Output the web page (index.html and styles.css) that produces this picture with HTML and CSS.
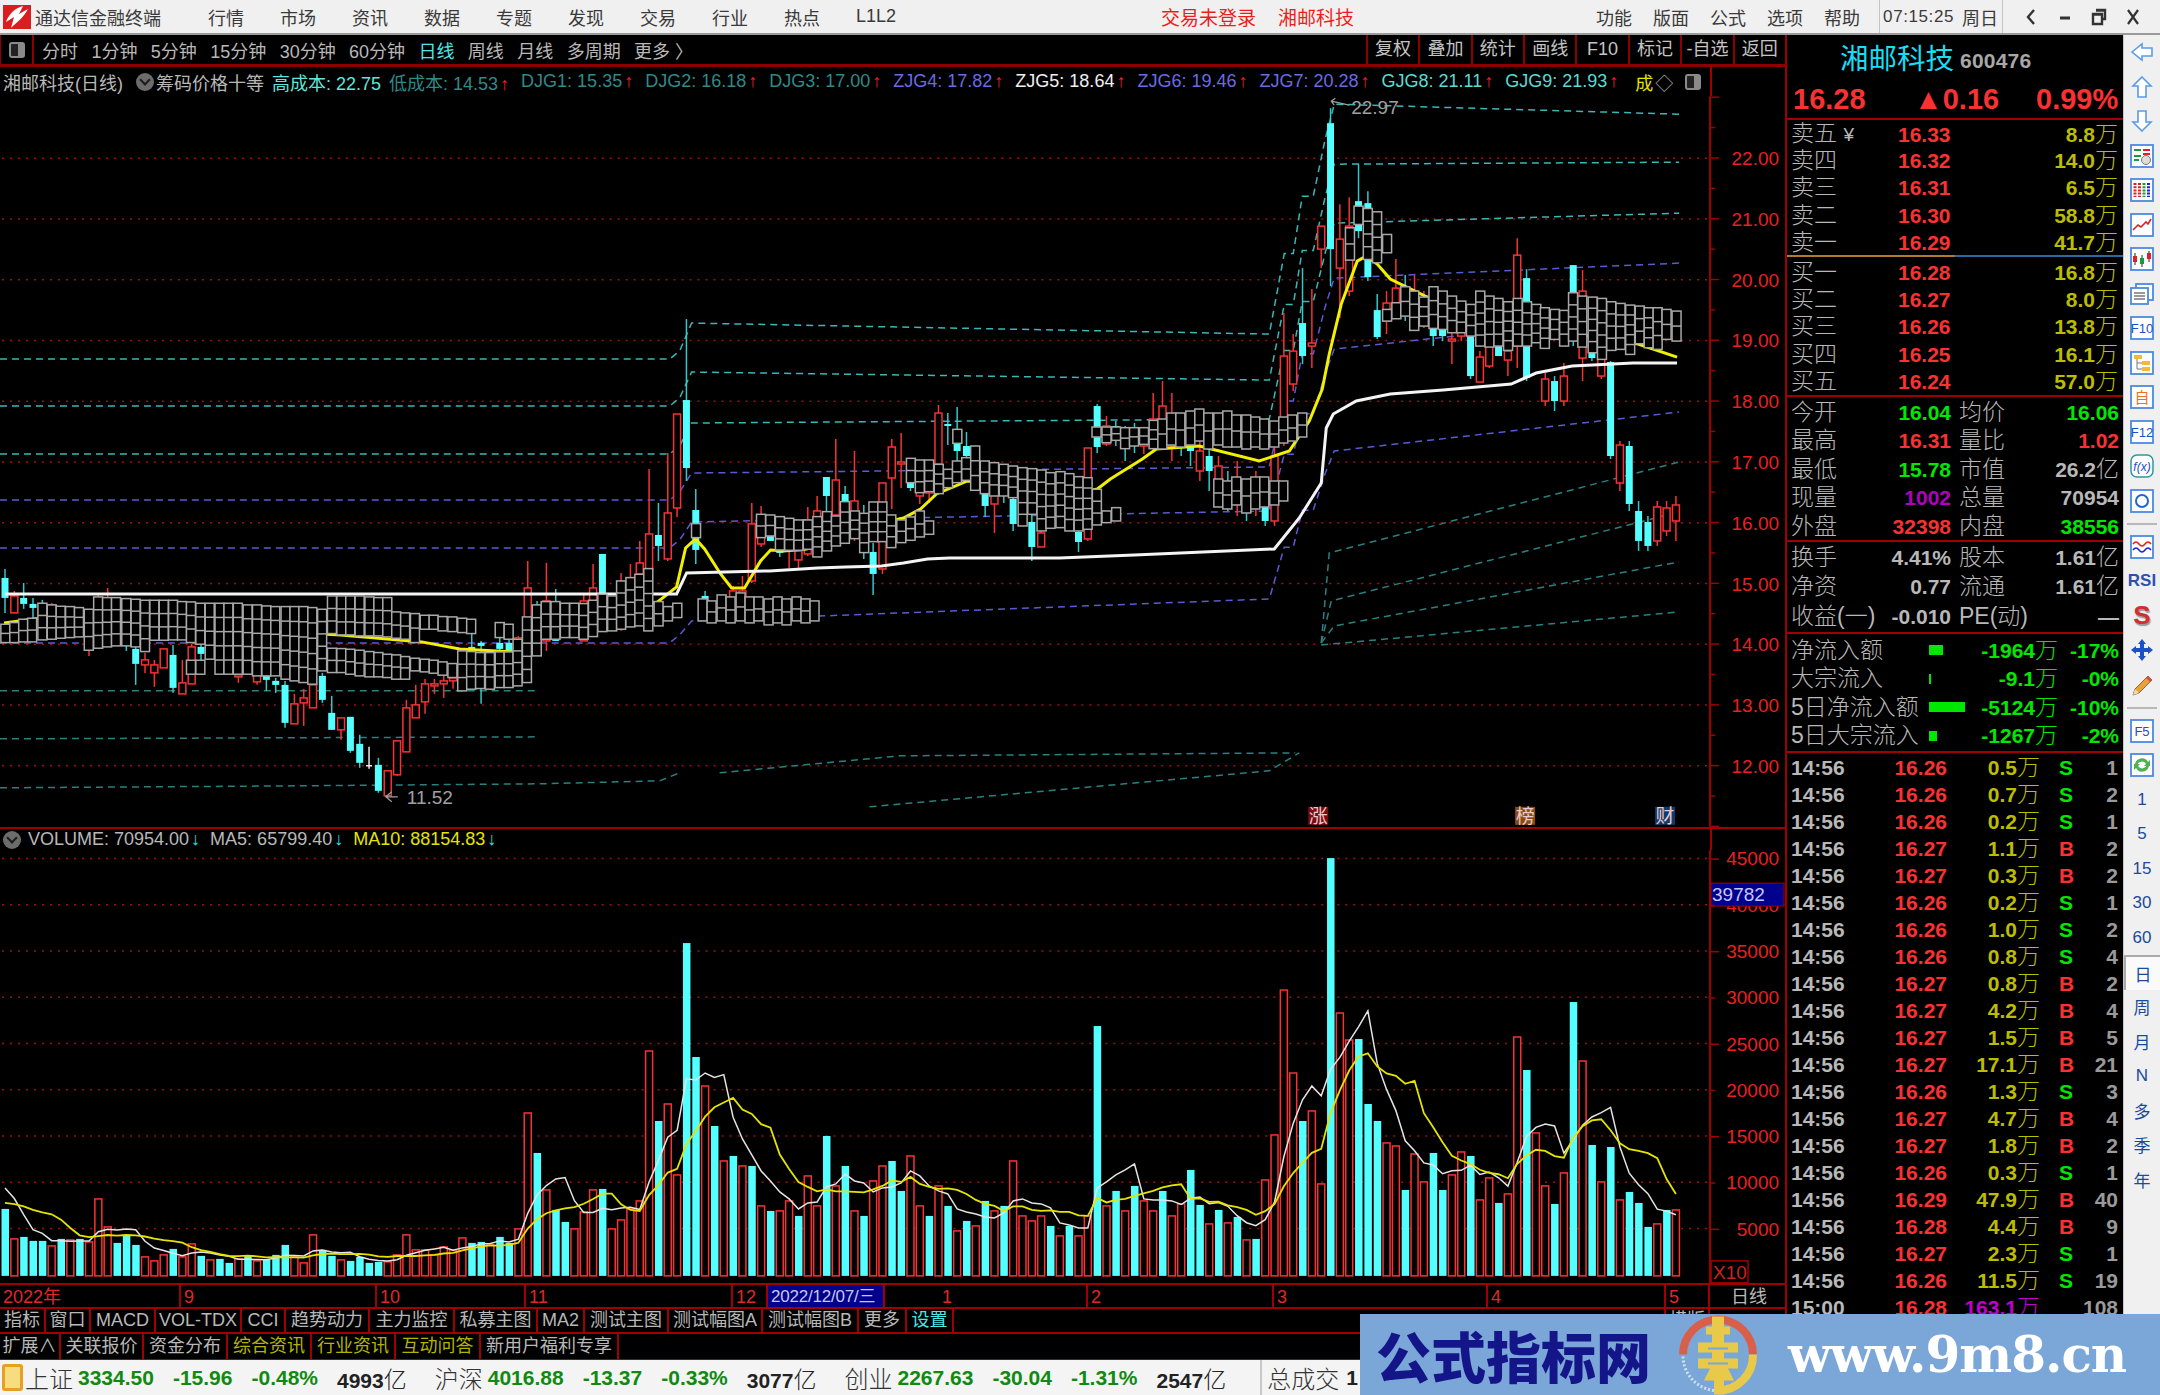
FILE: index.html
```html
<!DOCTYPE html>
<html lang="zh-CN">
<head>
    <meta charset="UTF-8">
    <title>通达信金融终端</title>
    <link rel="stylesheet" href="styles.css">
</head>
<body>

<div class="app">

    <!-- menu bar -->
    <div class="menubar">
        <svg class="logo" viewBox="0 0 28 24">
            <rect width="28" height="24" fill="#d81e1e"/>
            <path d="M20 1 C12 3 6 9 3 17 L11 12 L8 23 C14 17 20 13 25 4 L16 9 Z" fill="#fff"/>
        </svg>
        <span class="app-title">通达信金融终端</span>
        <div class="menu">
            <span>行情</span><span>市场</span><span>资讯</span><span>数据</span><span>专题</span>
            <span>发现</span><span>交易</span><span>行业</span><span>热点</span><span>L1L2</span>
        </div>
        <div class="menu-alert">
            <span>交易未登录</span><span>湘邮科技</span>
        </div>
        <div class="menu menu-right">
            <span>功能</span><span>版面</span><span>公式</span><span>选项</span><span>帮助</span>
        </div>
        <div class="clock"><span class="clock-time">07:15:25</span><span>周日</span></div>
        <div class="winbtns">
            <svg viewBox="0 0 12 20"><path d="M9 3 L3 10 L9 17" fill="none" stroke="#333" stroke-width="2.4"/></svg>
            <svg viewBox="0 0 12 20"><path d="M1 11 H11" stroke="#333" stroke-width="3"/></svg>
            <svg viewBox="0 0 16 20"><path d="M5 3 H14 V12 H11 M2 7 H11 V17 H2 Z M2 7.5 H11 M5 3.5 H14" fill="none" stroke="#333" stroke-width="2.4"/></svg>
            <svg viewBox="0 0 14 20"><path d="M2 3 L12 17 M12 3 L2 17" stroke="#333" stroke-width="2.2"/></svg>
        </div>
    </div>

    <div class="workspace">

        <!-- chart column -->
        <div class="chart-col">
            <div class="toolbar">
                <div class="tool-icon"><i></i></div>
                <div class="periods">
                    <span>分时</span><span>1分钟</span><span>5分钟</span><span>15分钟</span><span>30分钟</span><span>60分钟</span>
                    <span class="on">日线</span><span>周线</span><span>月线</span><span>多周期</span><span>更多 〉</span>
                </div>
                <div class="tool-btns">
                    <span>复权</span><span>叠加</span><span>统计</span><span>画线</span><span>F10</span><span>标记</span><span>-自选</span><span>返回</span>
                </div>
            </div>

            <div class="pane-head">
                <span class="t-name">湘邮科技(日线)</span>
                <i class="round-btn"></i>
                <span class="t-name">筹码价格十等</span>
                <span class="t-hi">高成本: 22.75</span>
                <span class="t-lo">低成本: 14.53<b>↑</b></span>
                <span class="t-lo">DJG1: 15.35<b>↑</b></span>
                <span class="t-lo">DJG2: 16.18<b>↑</b></span>
                <span class="t-lo">DJG3: 17.00<b>↑</b></span>
                <span class="t-zj">ZJG4: 17.82<b>↑</b></span>
                <span class="t-wh">ZJG5: 18.64<b>↑</b></span>
                <span class="t-zj">ZJG6: 19.46<b>↑</b></span>
                <span class="t-zj">ZJG7: 20.28<b>↑</b></span>
                <span class="t-gj">GJG8: 21.11<b>↑</b></span>
                <span class="t-gj">GJG9: 21.93<b>↑</b></span>
                <span class="t-cheng">成</span>
                <span class="t-diamond">◇</span>
                <i class="small-box"></i>
            </div>
            <svg id="priceChart" class="chart price-chart" viewBox="0 95 1786 731"></svg>

            <div class="pane-head vol-head">
                <i class="round-btn"></i>
                <span class="t-name">VOLUME: 70954.00<b class="down">↓</b></span>
                <span class="t-name">MA5: 65799.40<b class="down">↓</b></span>
                <span class="t-ma10">MA10: 88154.83<b class="down">↓</b></span>
            </div>
            <svg id="volumeChart" class="chart volume-chart" viewBox="0 849 1786 433"></svg>

            <div class="timeaxis">
                <span>2022年</span><span>9</span><span>10</span><span>11</span><span>12</span>
                <span class="cursor-date">2022/12/07/三</span><span class="blank"></span>
                <span>1</span><span>2</span><span>3</span><span>4</span><span>5</span>
                <span class="period-name">日线</span>
            </div>

            <div class="tabs tabs-a">
                <span>指标</span><span>窗口</span><span>MACD</span><span>VOL-TDX</span><span>CCI</span><span>趋势动力</span><span>主力监控</span>
                <span>私募主图</span><span>MA2</span><span>测试主图</span><span>测试幅图A</span><span>测试幅图B</span><span>更多</span><span class="cyan">设置</span>
                <span class="blank"></span><span>横版</span>
            </div>
            <div class="tabs tabs-b">
                <span>扩展∧</span><span>关联报价</span><span>资金分布</span><span class="olive">综合资讯</span><span class="olive">行业资讯</span><span class="olive">互动问答</span><span>新用户福利专享</span>
            </div>
        </div>

        <!-- quote panel -->
        <div class="quote">
            <div class="q-title"><span class="q-name">湘邮科技</span><span class="q-code">600476</span></div>
            <div class="q-price">
                <span>16.28</span><span>▲0.16</span><span>0.99%</span>
            </div>

            <div class="book book-sell">
                <div class="book-row"><label>卖五 <small>¥</small></label><b>16.33</b><em>8.8<u>万</u></em></div>
                <div class="book-row"><label>卖四</label><b>16.32</b><em>14.0<u>万</u></em></div>
                <div class="book-row"><label>卖三</label><b>16.31</b><em>6.5<u>万</u></em></div>
                <div class="book-row"><label>卖二</label><b>16.30</b><em>58.8<u>万</u></em></div>
                <div class="book-row"><label>卖一</label><b>16.29</b><em>41.7<u>万</u></em></div>
            </div>
            <div class="book book-buy">
                <div class="book-row"><label>买一</label><b>16.28</b><em>16.8<u>万</u></em></div>
                <div class="book-row"><label>买二</label><b>16.27</b><em>8.0<u>万</u></em></div>
                <div class="book-row"><label>买三</label><b>16.26</b><em>13.8<u>万</u></em></div>
                <div class="book-row"><label>买四</label><b>16.25</b><em>16.1<u>万</u></em></div>
                <div class="book-row"><label>买五</label><b>16.24</b><em>57.0<u>万</u></em></div>
            </div>

            <div class="stats">
                <div class="kv"><label>今开</label><b class="green">16.04</b></div><div class="kv"><label>均价</label><b class="green">16.06</b></div>
                <div class="kv"><label>最高</label><b class="red">16.31</b></div><div class="kv"><label>量比</label><b class="red">1.02</b></div>
                <div class="kv"><label>最低</label><b class="green">15.78</b></div><div class="kv"><label>市值</label><b>26.2<u>亿</u></b></div>
                <div class="kv"><label>现量</label><b class="purple">1002</b></div><div class="kv"><label>总量</label><b>70954</b></div>
                <div class="kv"><label>外盘</label><b class="red">32398</b></div><div class="kv"><label>内盘</label><b class="green">38556</b></div>
            </div>
            <div class="stats stats-b">
                <div class="kv"><label>换手</label><b>4.41%</b></div><div class="kv"><label>股本</label><b>1.61<u>亿</u></b></div>
                <div class="kv"><label>净资</label><b>0.77</b></div><div class="kv"><label>流通</label><b>1.61<u>亿</u></b></div>
                <div class="kv"><label>收益(一)</label><b>-0.010</b></div><div class="kv"><label>PE(动)</label><b>—</b></div>
            </div>

            <div class="flows">
                <div class="flow-row"><label>净流入额</label><div class="flow-bar"><i style="width:14px"></i></div><b>-1964<u>万</u></b><b>-17%</b></div>
                <div class="flow-row"><label>大宗流入</label><div class="flow-bar"><i style="width:2px"></i></div><b>-9.1<u>万</u></b><b>-0%</b></div>
                <div class="flow-row"><label>5日净流入额</label><div class="flow-bar"><i style="width:36px"></i></div><b>-5124<u>万</u></b><b>-10%</b></div>
                <div class="flow-row"><label>5日大宗流入</label><div class="flow-bar"><i style="width:8px"></i></div><b>-1267<u>万</u></b><b>-2%</b></div>
            </div>

            <div id="ticks" class="ticks"></div>
        </div>

        <!-- right icon strip -->
        <div class="side">
            <div class="side-item"><svg viewBox="0 0 24 24"><path class="ol" d="M2 12 L12 4 V8 H22 V16 H12 V20 Z"/></svg></div>
            <div class="side-item"><svg viewBox="0 0 24 24"><path class="ol" d="M12 2 L21 11 H16 V22 H8 V11 H3 Z"/></svg></div>
            <div class="side-item"><svg viewBox="0 0 24 24"><path class="ol" d="M12 22 L21 13 H16 V2 H8 V13 H3 Z"/></svg></div>
            <div class="side-item"><svg viewBox="0 0 24 24"><rect class="box" x="1" y="1" width="22" height="22"/><path d="M4 6 H11 M4 12 H11 M4 16 H9" stroke="#1a9a3a" stroke-width="2"/><path d="M13 6 H20 M13 10 H20" stroke="#e02020" stroke-width="2"/><circle cx="16" cy="16" r="4.5" fill="#ddd" stroke="#777"/></svg></div>
            <div class="side-item"><svg viewBox="0 0 24 24"><rect class="box" x="1" y="1" width="22" height="22"/><path d="M5 5 V19" stroke="#e02020" stroke-width="3" stroke-dasharray="2 1.2"/><path d="M9.5 5 V19" stroke="#e02020" stroke-width="3" stroke-dasharray="2 1.2"/><path d="M14 5 V19" stroke="#1a9a3a" stroke-width="3" stroke-dasharray="2 1.2"/><path d="M18.5 5 V19" stroke="#2020e0" stroke-width="3" stroke-dasharray="2 1.2"/></svg></div>
            <div class="side-item"><svg viewBox="0 0 24 24"><rect class="box" x="1" y="1" width="22" height="22"/><path d="M3 17 L8 12 L11 14 L16 9 L18 11 L21 6" fill="none" stroke="#e02020" stroke-width="1.6"/></svg></div>
            <div class="side-item"><svg viewBox="0 0 24 24"><rect class="box" x="1" y="1" width="22" height="22"/><path d="M5 6 V18 M12 8 V20 M19 4 V15" stroke="#222"/><rect x="3" y="9" width="4" height="6" fill="#e02020"/><rect x="10" y="11" width="4" height="6" fill="#1a9a3a"/><rect x="17" y="6" width="4" height="6" fill="#e02020"/></svg></div>
            <div class="side-item"><svg viewBox="0 0 24 24"><rect class="box" x="6" y="2" width="17" height="16"/><rect class="box" x="1" y="6" width="17" height="16"/><path d="M4 11 H15 M4 14 H15 M4 17 H15" stroke="#777" stroke-width="1.6"/></svg></div>
            <div class="side-item"><svg viewBox="0 0 24 24"><rect class="box" x="1" y="1" width="22" height="22"/><text class="ico-t" x="12" y="17" font-size="13">F10</text></svg></div>
            <div class="side-item"><svg viewBox="0 0 24 24"><rect class="box" x="1" y="1" width="22" height="22"/><path d="M7 8 V18 H12 M7 12 H12" stroke="#777" fill="none"/><rect x="4" y="4" width="8" height="4" fill="#f5b93a"/><rect x="12" y="10" width="8" height="4" fill="#f5b93a"/><rect x="12" y="16" width="8" height="4" fill="#f5b93a"/></svg></div>
            <div class="side-item"><svg viewBox="0 0 24 24"><rect class="box" x="1" y="1" width="22" height="22"/><text class="ico-t ico-or" x="12" y="18" font-size="15">自</text></svg></div>
            <div class="side-item"><svg viewBox="0 0 24 24"><rect class="box" x="1" y="1" width="22" height="22"/><text class="ico-t" x="12" y="17" font-size="13">F12</text></svg></div>
            <div class="side-item"><svg viewBox="0 0 24 24"><rect x="1" y="1" width="22" height="22" rx="6" fill="#fff" stroke="#2a9a9a" stroke-width="1.5"/><text class="ico-t" x="12" y="17" font-size="12" font-style="italic">f(x)</text></svg></div>
            <div class="side-item"><svg viewBox="0 0 24 24"><rect class="box" x="1" y="1" width="22" height="22"/><circle cx="12" cy="12" r="6" fill="none" stroke="#1a6ad0" stroke-width="2"/></svg></div>
            <div class="side-sep"></div>
            <div class="side-item"><svg viewBox="0 0 24 24"><rect class="box" x="1" y="1" width="22" height="22"/><path d="M3 9 Q6 5 9 9 T15 9 T21 9" fill="none" stroke="#e02020" stroke-width="1.5"/><path d="M3 15 Q6 11 9 15 T15 15 T21 15" fill="none" stroke="#2020e0" stroke-width="1.5"/></svg></div>
            <div class="side-item"><span class="side-rsi">RSI</span></div>
            <div class="side-item"><span class="side-s">S</span></div>
            <div class="side-item"><svg viewBox="0 0 24 24"><path d="M12 1 L16 6 H14 V10 H18 V8 L23 12 L18 16 V14 H14 V18 H16 L12 23 L8 18 H10 V14 H6 V16 L1 12 L6 8 V10 H10 V6 H8 Z" fill="#1a50c8"/></svg></div>
            <div class="side-item"><svg viewBox="0 0 24 24"><path d="M3 22 L5 16 L18 3 L22 7 L9 20 Z" fill="#e9a23a" stroke="#8a6a30"/><path d="M18 3 L22 7 L20 9 L16 5 Z" fill="#d05050"/><path d="M3 22 L5 16 L9 20 Z" fill="#f3d9b0"/></svg></div>
            <div class="side-sep"></div>
            <div class="side-item"><svg viewBox="0 0 24 24"><rect class="box" x="1" y="1" width="22" height="22"/><text class="ico-t" x="12" y="17" font-size="13">F5</text></svg></div>
            <div class="side-item"><svg viewBox="0 0 24 24"><rect class="box" x="1" y="1" width="22" height="22"/><path d="M5 11 A7 7 0 0 1 18 9 L20 7 V13 H14 L16 11 A5 5 0 0 0 7 12 Z M19 13 A7 7 0 0 1 6 15 L4 17 V11 H10 L8 13 A5 5 0 0 0 17 12 Z" fill="#50b050"/></svg></div>
            <div class="side-item side-txt">1</div>
            <div class="side-item side-txt">5</div>
            <div class="side-item side-txt">15</div>
            <div class="side-item side-txt">30</div>
            <div class="side-item side-txt">60</div>
            <div class="side-item side-txt side-on">日</div>
            <div class="side-item side-txt">周</div>
            <div class="side-item side-txt">月</div>
            <div class="side-item side-txt">N</div>
            <div class="side-item side-txt">多</div>
            <div class="side-item side-txt">季</div>
            <div class="side-item side-txt">年</div>
        </div>
    </div>

    <!-- index strip -->
    <div class="statusbar">
        <i class="status-icon"></i>
        <div class="index"><label>上证</label><b>3334.50</b><b>-15.96</b><b>-0.48%</b><em>4993<u>亿</u></em></div>
        <div class="index"><label>沪深</label><b>4016.88</b><b>-13.37</b><b>-0.33%</b><em>3077<u>亿</u></em></div>
        <div class="index index-last"><label>创业</label><b>2267.63</b><b>-30.04</b><b>-1.31%</b><em>2547<u>亿</u></em></div>
        <div class="index index-total"><label>总成交</label><em>1</em></div>
    </div>

    <!-- site stamp over the screenshot corner -->
    <div class="stamp">
        <span class="stamp-cn">公式指标网</span>
        <svg class="stamp-logo" viewBox="0 0 80 80">
            <path d="M5 40 A35 35 0 0 1 75 40" fill="none" stroke="#d8604a" stroke-width="8"/>
            <path d="M75 40 A35 35 0 0 1 40 76" fill="none" stroke="#e9c94a" stroke-width="8"/>
            <path d="M5 42 A35 35 0 0 0 36 76" fill="none" stroke="#cfe0f2" stroke-width="3" stroke-dasharray="2 2"/>
            <path d="M34 2 H46 V12 H52 V20 H46 V28 H60 V38 H46 V44 H60 V54 H50 L56 66 H46 V80 H36 V66 H26 L32 54 H20 V44 H34 V38 H20 V28 H34 V20 H28 V12 H34 Z" fill="#e9c94a"/>
            <path d="M30 34 H50 M30 49 H50" stroke="#7ba7d8" stroke-width="2"/>
        </svg>
        <span class="stamp-url">www.9m8.cn</span>
    </div>
</div>

<script src="chart.js"></script>
</body>
</html>
```

FILE: styles.css
```css
* {
    box-sizing: border-box;
}

body {
    margin: 0;
    background-color: #000;
    font-family: 'Liberation Sans', 'Noto Sans CJK SC', sans-serif;
    font-size: 18px;
    color: #b8b8b8;
}

.app {
    position: relative;
    width: 2160px;
    height: 1395px;
    overflow: hidden;
    display: flex;
    flex-direction: column;
}

/* menu bar */
.menubar {
    height: 35px;
    flex: none;
    display: flex;
    align-items: center;
    background-color: #f0f0f0;
    border-bottom: 2px solid #9a9a9a;
    color: #3a3a3a;
    padding-left: 3px;
}

.logo {
    width: 28px;
    height: 24px;
    flex: none;
}

.app-title {
    margin-left: 4px;
}

.menu {
    display: flex;
    align-items: center;
    gap: 36px;
    margin-left: 47px;
}

.menu-alert {
    display: flex;
    gap: 22px;
    margin-left: 265px;
    font-size: 19px;
    color: #f01c1c;
}

.menu-right {
    gap: 21px;
    margin-left: 242px;
}

.clock {
    display: flex;
    gap: 8px;
    height: 100%;
    align-items: center;
    margin-left: 19px;
    padding: 0 4px 0 3px;
    border-left: 1px solid #c4c4c4;
    border-right: 1px solid #c4c4c4;
}

.clock-time {
    font-size: 17px;
    letter-spacing: 0.6px;
}

.winbtns {
    display: flex;
    align-items: center;
    gap: 18px;
    margin-left: 20px;
}

.winbtns svg {
    height: 20px;
    width: 16px;
}

.workspace {
    flex: 1;
    min-height: 0;
    display: flex;
}

/* chart column */
.chart-col {
    width: 1787px;
    flex: none;
    display: flex;
    flex-direction: column;
    border-right: 2px solid #a00000;
}

.toolbar {
    height: 32px;
    flex: none;
    display: flex;
    align-items: center;
    border-bottom: 3px solid #8c0000;
    border-left: 1px solid #8c0000;
}

.tool-icon {
    width: 33px;
    height: 100%;
    display: flex;
    align-items: center;
    justify-content: center;
    border-right: 2px solid #8c0000;
}

.tool-icon i,
.small-box {
    display: block;
    width: 16px;
    height: 16px;
    flex: none;
    border: 2px solid #8a8a8a;
    border-radius: 3px;
    background: linear-gradient(90deg, #222 60%, #8a8a8a 60%);
}

.periods {
    display: flex;
    gap: 13.4px;
    margin-left: 8px;
}

.periods .on {
    color: #4ce8e8;
}

.tool-btns {
    margin-left: auto;
    display: grid;
    grid-template-columns: repeat(8, 52.4px);
    height: 100%;
    text-align: center;
    line-height: 29px;
    color: #c4c4c4;
}

.tool-btns span {
    border-left: 2px solid #8c0000;
}

.pane-head {
    height: 29px;
    width: 1712px;
    flex: none;
    display: flex;
    align-items: center;
    padding-left: 3px;
    border-right: 2px solid #a00000;
    white-space: nowrap;
}

.pane-head span {
    margin-right: 8px;
}

.pane-head b {
    color: #ff2020;
    font-weight: normal;
    margin-left: 2px;
    margin-right: 4px;
}

.pane-head b.down {
    color: #30e0e0;
}

.round-btn {
    position: relative;
    width: 18px;
    height: 18px;
    margin: 0 2px 0 5px;
    border-radius: 50%;
    background-color: #6c6c6c;
    flex: none;
}

.round-btn::after {
    content: '';
    position: absolute;
    left: 5px;
    top: 3px;
    width: 6px;
    height: 6px;
    border-right: 2px solid #1c1c1c;
    border-bottom: 2px solid #1c1c1c;
    transform: rotate(45deg);
}

.t-hi {
    color: #5ee6dc;
}

.t-lo {
    color: #2f8a8a;
}

.t-zj {
    color: #6a6ae6;
}

.t-wh {
    color: #f0f0f0;
}

.t-gj {
    color: #58dcd4;
}

.t-cheng {
    color: #e4e400;
    margin-left: 5px;
}

.t-diamond {
    color: #a0a0a0;
    margin-left: -6px;
}

.small-box {
    margin-left: 4px;
}

.chart {
    display: block;
    flex: none;
    width: 1785px;
    background-color: #000;
    overflow: visible;
}

.price-chart {
    height: 731px;
}

.volume-chart {
    height: 433px;
}

.vol-head {
    height: 23px;
    border-top: 2px solid #a00000;
    width: 100%;
    border-right: none;
    background: linear-gradient(90deg, transparent 1710px, #a00000 1710px, #a00000 1712px, transparent 1712px);
}

.vol-head .round-btn {
    margin: 0 7px 0 0;
}

.vol-head b {
    margin-right: 3px;
}

.vol-head span {
    margin-right: 7px;
}

.t-ma10 {
    color: #e4e400;
}

.chart text {
    font-family: 'Liberation Sans', 'Noto Sans CJK SC', sans-serif;
    font-size: 19px;
}

.axis-label {
    fill: #e82020;
    text-anchor: end;
}

.note {
    fill: #a0a0a0;
}

.mark-label {
    fill: #e8c8c8;
    text-anchor: middle;
}

.blue-label {
    fill: #c8c8ff;
}

.x-label {
    fill: #d02020;
}

/* time axis and tabs */
.timeaxis {
    height: 24px;
    flex: none;
    display: grid;
    grid-template-columns: 181px 196px 149px 207px 35px 117px 54px 149px 186px 214px 178px 44px 1fr;
    border-top: 2px solid #a00000;
    line-height: 24px;
    color: #e02828;
    overflow: hidden;
}

.timeaxis span {
    padding-left: 3px;
    border-right: 2px solid #a00000;
    white-space: nowrap;
}

.timeaxis .cursor-date {
    background-color: #00008c;
    color: #c8c8e8;
    font-size: 17px;
    letter-spacing: -0.2px;
}

.timeaxis .blank {
    border-right: none;
}

.timeaxis .period-name {
    color: #b8b8b8;
    text-align: center;
    border-right: none;
}

.tabs {
    flex: none;
    display: grid;
    border-top: 2px solid #a00000;
    text-align: center;
    white-space: nowrap;
}

.tabs span {
    border-right: 2px solid #a00000;
}

.tabs-a {
    height: 25px;
    line-height: 22px;
    grid-template-columns: 46px 45px 65px 86px 44px 84px 85px 83px 47px 84px 94px 96px 48px 47px 712px 44px 1fr;
}

.tabs-b {
    height: 29px;
    line-height: 25px;
    grid-template-columns: 61px 83px 84px 84px 84px 85px 138px;
    border-bottom: 2px solid #a00000;
}

.tabs .cyan {
    color: #4ce8e8;
}

.tabs .olive {
    color: #b4b400;
}

.tabs .blank {
    border-right: 2px solid #a00000;
}

/* quote panel */
.quote {
    width: 336px;
    flex: none;
    overflow: hidden;
    background-color: #000;
    border-bottom: 2px solid #a00000;
}

.q-title {
    height: 48px;
    display: flex;
    align-items: center;
    padding: 0 0 0 53px;
    gap: 6px;
}

.q-name {
    font-size: 28.5px;
    color: #19dcf5;
    line-height: 1;
}

.q-code {
    font-size: 21px;
    font-weight: bold;
    color: #a8a8a8;
    letter-spacing: 0.2px;
    padding-top: 4px;
}

.q-price {
    height: 37px;
    display: grid;
    grid-template-columns: 121px 122px 1fr;
    align-items: center;
    padding: 0 6px 5px;
    font-size: 29px;
    font-weight: bold;
    color: #f83232;
    border-bottom: 2px solid #a00000;
}

.q-price span:nth-child(3) {
    text-align: right;
}

.book {
    padding: 0 5px 0 4px;
}

.book-sell {
    height: 137px;
    padding-top: 0;
    border-bottom: 2px solid;
    border-image: linear-gradient(90deg, #b07a28 50%, #2a6aa0 50%) 1;
}

.book-buy {
    height: 140px;
    padding-top: 2px;
    border-bottom: 2px solid #a00000;
}

.book-row {
    height: 27.2px;
    display: grid;
    grid-template-columns: 107px 70px 1fr;
    align-items: center;
}

.book-row label,
.kv label,
.flow-row label {
    font-size: 23px;
    line-height: 27px;
    font-weight: 300;
    white-space: nowrap;
}

.book-row small {
    font-size: 19px;
}

.book-row b,
.book-row em,
.kv b,
.flow-row b,
.tick b,
.tick span {
    font-size: 21px;
    font-weight: bold;
    font-style: normal;
    line-height: 27px;
}

.book-row b {
    color: #f83232;
}

.book-row em {
    color: #bcbc00;
    text-align: right;
}

u {
    text-decoration: none;
    font-size: 23px;
    font-weight: 300;
}

.stats {
    display: grid;
    grid-template-columns: 160px 160px;
    column-gap: 8px;
    padding: 1px 4px 0;
    height: 145px;
    border-bottom: 2px solid #a00000;
}

.stats-b {
    height: 92px;
}

.kv {
    height: 28.5px;
    display: flex;
    justify-content: space-between;
    align-items: center;
}

.kv b {
    color: #b8b8b8;
    white-space: nowrap;
}

.kv .green {
    color: #00e800;
}

.kv .red {
    color: #f83232;
}

.kv .purple {
    color: #b000c0;
}

.flows {
    height: 119px;
    padding: 2px 4px 0;
    border-bottom: 2px solid #a00000;
}

.flow-row {
    height: 28.5px;
    display: grid;
    grid-template-columns: 138px 44px 85px 1fr;
    align-items: center;
    white-space: nowrap;
}

.flow-row b {
    color: #00e800;
    text-align: right;
}

.flow-bar i {
    display: block;
    height: 10px;
    background-color: #00e800;
}

.ticks {
    padding: 1px 5px 0 4px;
}

.tick {
    height: 27px;
    display: grid;
    grid-template-columns: 70px 86px 93px 30px 1fr;
    align-items: center;
    white-space: nowrap;
}

.tick .t-time {
    color: #b8b8b8;
}

.tick .t-price,
.tick .t-vol,
.tick .t-count {
    text-align: right;
}

.tick .t-vol {
    color: #bcbc00;
}

.tick .t-vol.big {
    color: #c000d0;
}

.tick .t-side {
    padding-left: 19px;
}

.tick .t-count {
    color: #9a9a9a;
}

.up {
    color: #f83232 !important;
}

.down-t {
    color: #00e800 !important;
}

/* right icon strip */
.side {
    flex: 1;
    display: flex;
    flex-direction: column;
    background-color: #f0f0f0;
    align-items: center;
    border-left: 1px solid #c8c8c8;
}

.side-item {
    height: 34.5px;
    width: 100%;
    flex: none;
    display: flex;
    align-items: center;
    justify-content: center;
}

.side-item svg {
    width: 24px;
    height: 24px;
}

.ol {
    fill: #fff;
    stroke: #5b9bea;
    stroke-width: 1.6;
}

.box {
    fill: #fff;
    stroke: #4a8ae0;
    stroke-width: 1.8;
}

.ico-t {
    fill: #1a50c8;
    text-anchor: middle;
    font-family: 'Liberation Sans', sans-serif;
}

.ico-or {
    fill: #f07020;
    font-family: 'Noto Sans CJK SC', sans-serif;
}

.side-sep {
    height: 11.5px;
    width: 30px;
    flex: none;
    background: linear-gradient(#b8b8b8, #b8b8b8) center / 100% 2px no-repeat;
}

.side-rsi {
    font-size: 17px;
    font-weight: bold;
    color: #3050b0;
}

.side-s {
    font-size: 26px;
    font-weight: bold;
    color: #d03030;
    text-shadow: 1px 2px 1px #999;
}

.side-txt {
    font-size: 17px;
    color: #1a4a9a;
}

.side-on {
    background-color: #fafafa;
    border-left: 2px solid #aaa;
    border-top: 2px solid #aaa;
}

/* index strip */
.statusbar {
    height: 35px;
    flex: none;
    display: flex;
    align-items: center;
    background-color: #f4f4f4;
    color: #333;
    padding-left: 2px;
    white-space: nowrap;
}

.status-icon {
    width: 21px;
    height: 27px;
    flex: none;
    border-radius: 3px;
    border: 3px solid #e8a020;
    background-color: #f8dc80;
    margin-right: 2px;
}

.index {
    display: flex;
    align-items: center;
    gap: 19px;
    margin-right: 28px;
}

.index-last {
    margin-right: 34px;
}

.index label {
    font-size: 24px;
    font-weight: 300;
    margin-right: -14px;
}

.index b {
    font-size: 21px;
    color: #118a11;
}

.index em {
    font-style: normal;
    font-size: 21px;
    font-weight: bold;
    color: #222;
}

.index-total {
    border-left: 2px solid #c8c8c8;
    padding-left: 5px;
    gap: 7px;
    margin-left: 0;
}

.index-total label {
    margin-right: 0;
}

/* site stamp */
.stamp {
    position: absolute;
    left: 1360px;
    top: 1314px;
    width: 800px;
    height: 81px;
    background-color: #7ba7d8;
    display: flex;
    align-items: center;
    padding-left: 16px;
}

.stamp-cn {
    font-family: 'Noto Sans CJK SC', sans-serif;
    font-size: 55px;
    font-weight: 900;
    color: #15158a;
    line-height: 1;
}

.stamp-logo {
    width: 80px;
    height: 81px;
    margin-left: 27px;
    flex: none;
}

.stamp-url {
    font-family: 'DejaVu Serif', serif;
    font-size: 50px;
    font-weight: bold;
    color: #fff;
    margin-left: 30px;
    letter-spacing: -1px;
    line-height: 1;
}
```

FILE: chart.js
```js
const CYAN = '#54ffff';
const RED = '#f83232';
const TEAL = '#38b8b8';
const TEAL_DIM = '#2a8080';
const PURPLE = '#5a5ad6';
const GREY = '#a8a8a8';

const STEP = 9.34;
const barX = i => 5 + STEP * i;
const priceY = p => 157 + (22 - p) * 60.8;
const volY = v => 1274 - v / 5000 * 46.3;

// i, colour, high, body top, body bottom, low (pixel rows)
const candles = [
    [0,'c',568,577,597,612],[1,'r',590,595,612,612],[2,'c',582,597,603,608],[3,'c',597,603,607,617],[4,'c',599,603,606,610],[5,'r',602,604,608,612],
    [9,'r',640,642,645,655],[10,'r',593,600,620,640],[11,'r',587,600,620,640],[13,'c',640,642,645,650],[14,'c',640,648,663,684],[15,'r',652,659,664,672],
    [16,'r',659,664,672,686],[17,'r',648,648,667,667],[18,'c',644,654,687,692],[19,'r',659,682,693,693],[20,'r',643,646,683,683],[21,'c',643,646,653,659],
    [25,'r',670,674,675,682],[27,'r',670,674,681,684],[28,'c',672,675,679,690],[29,'c',677,680,684,692],[30,'c',680,684,722,727],[31,'r',693,703,723,723],
    [32,'r',688,697,702,725],[33,'r',646,684,707,707],[34,'c',672,675,699,702],[35,'c',695,712,729,729],[36,'r',717,717,729,739],[37,'c',716,716,750,752],
    [38,'c',734,743,762,767],[39,'w',746,765,766,768],[40,'c',757,764,790,792],[41,'r',770,770,795,796],[42,'r',740,740,774,775],[43,'r',699,707,751,751],
    [44,'r',684,704,717,717],[45,'r',678,683,701,713],[46,'r',678,683,684,693],[47,'r',675,680,683,697],[48,'r',675,677,680,688],
    [50,'c',633,646,650,655],[51,'c',640,642,645,703],[53,'c',630,642,648,650],[54,'c',632,642,650,652],[55,'r',635,637,645,645],[56,'r',560,587,630,650],
    [57,'c',600,610,640,650],[58,'r',562,600,640,650],[59,'c',588,605,640,640],[62,'r',593,600,640,640],[63,'r',563,587,600,620],[64,'c',553,553,592,600],
    [66,'r',572,590,620,630],[67,'r',563,585,610,620],[68,'r',540,562,573,600],[69,'r',468,533,568,600],[70,'c',502,534,545,560],[71,'r',452,512,558,560],
    [72,'r',413,413,507,516],[73,'c',318,399,467,480],[74,'c',488,509,549,563],[75,'c',590,595,600,610],[78,'r',585,590,600,605],[79,'r',575,590,600,605],
    [80,'r',502,523,580,582],[81,'r',505,520,543,546],[82,'c',530,535,540,538],[83,'c',540,550,552,556],[84,'r',530,545,550,567],[85,'r',530,550,559,567],
    [86,'r',506,548,553,555],[87,'r',495,510,540,550],[88,'c',476,476,495,512],[89,'r',438,479,514,516],[90,'c',485,493,505,510],[91,'r',450,500,530,540],
    [92,'c',504,520,545,558],[93,'c',542,551,573,594],[94,'r',482,482,568,573],[95,'r',438,446,477,508],[96,'r',432,461,463,487],[97,'c',470,482,487,490],
    [98,'r',480,490,495,503],[99,'r',470,490,492,502],[100,'r',404,412,463,470],[101,'c',412,423,424,444],[102,'c',406,430,450,460],[103,'c',431,445,455,465],
    [105,'c',470,493,505,516],[106,'r',492,492,503,532],[107,'c',480,490,495,502],[108,'c',490,498,523,530],[110,'c',500,521,546,560],[111,'r',500,532,546,546],
    [115,'c',515,531,541,551],[116,'r',447,447,538,540],[117,'c',403,405,446,452],[118,'r',415,425,443,445],[119,'c',420,425,440,445],[120,'c',425,430,445,460],
    [121,'c',422,430,445,452],[122,'r',426,430,445,453],[123,'r',392,418,440,450],[124,'r',380,405,430,445],[125,'r',392,415,445,460],[126,'c',415,430,440,455],
    [127,'c',420,435,450,465],[128,'r',440,450,470,480],[129,'c',445,455,470,490],[130,'r',455,465,495,505],[131,'c',470,480,500,510],[132,'r',460,478,500,515],
    [133,'c',480,495,512,520],[134,'r',470,480,505,515],[135,'c',495,505,520,525],[136,'r',440,455,520,525],[137,'r',312,355,440,445],[138,'r',333,350,383,390],
    [139,'c',267,322,355,363],[140,'r',288,342,345,367],[141,'r',225,225,248,267],[142,'c',107,122,248,285],[143,'r',203,238,267,317],[144,'r',196,225,290,295],
    [145,'c',163,200,230,237],[146,'c',190,202,276,280],[147,'c',293,309,336,338],[148,'r',290,302,320,333],[149,'r',258,287,302,305],[150,'c',274,285,310,320],
    [151,'r',274,290,315,320],[152,'r',290,300,320,327],[153,'c',300,315,335,345],[154,'c',300,315,335,340],[155,'r',330,338,340,363],[156,'r',310,320,335,340],
    [157,'c',335,335,375,378],[158,'r',350,356,381,381],[159,'r',345,345,365,367],[160,'c',340,345,355,353],[161,'r',350,350,359,375],[162,'r',237,254,345,367],
    [163,'c',268,277,377,380],[165,'r',372,378,400,405],[166,'c',375,380,400,410],[167,'r',362,375,400,405],[168,'c',264,264,340,345],[169,'r',269,290,357,380],
    [170,'c',340,347,357,360],[171,'r',353,353,375,378],[172,'c',360,361,455,458],[173,'r',440,444,482,490],[174,'c',440,445,503,510],[175,'c',500,510,540,550],
    [176,'c',515,521,545,550],[177,'r',500,506,540,545],[178,'r',500,507,530,535],[179,'r',495,504,520,540]
];

// chip blocks: x, top, bottom, cells, read at the scale given for each block
const chips = [
    { sx: 2.24, x0: 0, y0: 540, sy: 3, cols: [
        [12,250,305,2],[32,245,305,2],[52,235,303,2],[72,232,303,2],[95,187,297,3],[116,192,295,3],[136,196,292,3],[157,197,290,3],[177,200,288,3],
        [199,205,328,3],[220,168,322,4],[240,170,318,4],[260,170,315,4],[283,173,315,4],[304,175,318,4],[325,178,332,4],[346,178,298,3],[367,178,298,3],
        [388,178,297,3],[408,182,297,3],[428,183,305,3],[449,187,310,3],[428,358,400,1],[449,358,400,1],[470,187,355,4],[492,187,400,5],[512,187,400,5],
        [533,187,400,5],[555,192,400,5],[576,192,405,5],[597,195,405,5],[617,197,405,5],[640,197,415,5],[660,197,420,5],[680,197,425,5],[700,200,430,5],
        [722,205,390,5],[744,165,278,3],[744,322,395,2],[765,165,282,3],[765,323,395,2],[785,165,282,3],[785,325,400,2],[806,165,285,3],[806,328,405,2],
        [828,168,285,3],[828,332,408,2],[848,170,285,3],[848,335,408,2],[868,170,288,3],[868,340,410,2],[888,213,292,2],[888,342,415,2],[908,216,295,2],
        [908,347,415,2],[930,218,305,2],[930,352,390,1],[952,223,265,1],[952,355,393,1],[972,223,265,1],[972,358,397,1],[992,227,270,1],[992,363,403,1],
        [1014,228,272,1],[1014,368,410,1],[1036,232,275,1],[1036,330,450,3],[1056,235,278,1],[1056,332,445,3],[1076,335,443,3],[1098,335,445,3],
        [1120,245,290,1],[1120,333,440,3],[1140,250,295,1],[1140,333,440,3],[1160,295,435,4],[1181,228,425,5],[1203,192,345,4],[1223,182,295,3],[1245,182,295,3],
        [1266,187,290,3],[1287,187,290,3],[1308,188,295,3],[1329,178,287,3],[1350,160,272,3],[1372,165,270,3],[1392,120,265,4],[1413,110,258,4],[1433,100,255,4],
        [1453,83,270,5],[1476,182,255,2],[1497,197,240,1],[1518,187,230,1]
    ]},
    { sx: 2.8, x0: 600, y0: 300, sy: 3, cols: [
        [270,668,710,1],[452,640,710,2],[478,642,705,2],[505,647,747,3],[531,652,748,3],[557,657,748,3],[583,657,745,3],[610,647,768,4],[637,632,750,4],
        [662,645,735,3],[687,602,727,4],[715,630,713,3],[741,637,755,4],[767,603,722,4],[792,603,722,4],[817,642,740,3],[845,657,725,2],[871,648,718,2],
        [897,630,708,2],[923,660,700,1],[872,472,545,2],[897,477,575,3],[923,477,572,3],[950,490,578,3],[976,505,560,2],[1001,480,545,2],[1027,470,538,2],
        [1052,435,568,3],[1079,480,578,3],[1105,485,585,3],[1132,490,585,3],[1158,495,590,3],[1185,500,675,5],[1212,503,640,4],[1238,507,690,5],[1263,515,682,5],
        [1291,512,680,5],[1316,518,690,5],[1342,527,690,5],[1367,530,685,5],[1393,565,672,3],[1420,630,665,1],[1447,620,660,1],[1002,385,427,1],
        [1392,378,408,1],[1420,378,425,2],[1447,378,418,2],[1472,380,443,2],[1497,380,435,2],[1525,380,430,2],[1552,358,443,3]
    ]},
    { sx: 2.8, x0: 1180, y0: 90, sy: 3, cols: [
        [502,345,400,1],[478,410,507,2],[528,352,505,4],[554,362,515,4],[582,430,485,1],[582,655,690,1],[608,635,683,1],[633,587,675,2],[658,600,718,3],
        [685,618,705,3],[712,587,712,3],[738,600,715,3],[764,615,725,3],[790,630,725,3],[817,640,735,3],[843,600,765,5],[869,615,768,4],[894,622,765,4],
        [921,632,778,5],[948,622,765,4],[974,632,765,4],[1000,640,755,4],[1024,650,772,4],[1052,655,745,3],[1078,658,765,3],[1103,605,750,4],[1129,615,768,4],
        [1158,618,785,5],[1184,622,805,5],[1210,632,778,4],[1236,637,775,4],[1263,642,790,5],[1290,645,758,3],[1315,650,770,4],[1340,650,775,3],[1365,655,745,2],[1393,660,750,2]
    ]},
    { sx: 1, x0: 0, y0: 0, sy: 1, cols: [
        [703,598,620,1],[712,600,622,2],[722,594,620,2],[731,596,622,2],[741,592,620,2],[750,596,622,2],[759,596,620,2],[769,598,624,2],[778,596,622,2],
        [787,598,624,2],[797,596,620,2],[806,598,622,2],[815,600,620,1],
        [1163,418,448,2],[1172,412,444,2],[1181,412,446,2],[1191,410,444,2],[1200,408,440,2],[1209,412,448,2],[1219,412,444,2],[1228,410,446,2],[1237,414,446,2],
        [1247,414,448,2],[1256,416,446,2],[1265,418,448,2],[1275,420,446,2],[1284,416,442,2],[1293,414,440,2],[1303,412,436,2],
        [1219,478,506,2],[1228,480,508,2],[1237,476,504,2],[1247,478,512,2],[1256,476,508,2],[1265,476,506,2],[1275,480,504,2],[1284,480,500,1]
    ]}
];

// [height in px, red?]
const volumes = [
    [67,0],[37,1],[39,0],[35,0],[35,0],[30,1],[37,0],[36,1],[37,0],[34,1],[77,1],[49,1],[33,0],[41,0],[31,0],[19,1],[15,1],[21,1],[27,0],[19,1],
    [32,1],[20,0],[16,1],[17,0],[13,0],[17,1],[20,0],[15,1],[16,0],[21,0],[31,0],[19,1],[13,1],[41,1],[26,0],[20,0],[16,1],[15,0],[19,0],[13,0],
    [14,0],[14,1],[21,1],[41,1],[26,1],[26,1],[21,1],[29,1],[26,1],[38,1],[33,0],[34,0],[31,1],[39,0],[33,0],[47,1],[163,1],[123,0],[86,1],[66,0],
    [54,0],[47,1],[64,1],[86,1],[87,0],[47,1],[56,1],[67,1],[75,1],[225,1],[155,0],[172,1],[101,1],[333,0],[219,0],[190,1],[150,0],[115,1],[120,0],[110,1],
    [110,0],[70,1],[65,0],[65,1],[75,1],[60,0],[100,1],[70,1],[140,0],[90,1],[110,0],[65,1],[60,0],[95,1],[110,1],[115,0],[85,0],[120,1],[70,1],[60,0],
    [90,1],[70,0],[45,1],[55,0],[50,1],[75,0],[65,1],[70,0],[115,1],[60,1],[55,1],[60,1],[50,0],[40,1],[50,0],[40,1],[60,1],[250,0],[70,1],[85,0],
    [65,1],[90,0],[75,1],[65,1],[85,0],[60,1],[72,1],[106,0],[71,0],[52,1],[66,0],[53,1],[59,0],[36,1],[37,0],[96,1],[141,1],[286,1],[203,1],[155,0],
    [165,1],[92,1],[418,0],[263,1],[236,1],[237,0],[172,0],[155,0],[133,1],[130,1],[86,0],[122,1],[94,1],[123,0],[86,0],[101,1],[124,1],[120,0],[76,1],[98,1],
    [73,0],[82,1],[239,1],[206,0],[143,1],[90,1],[72,0],[103,1],[274,0],[215,1],[131,0],[94,1],[129,0],[76,1],[84,0],[73,0],[49,0],[52,1],[66,0],[66,1]
];

// earlier bars, only used to start the averages
const earlier = [50,60,70,60,50,90,120,110,53];

const yellowLine = [[4,622],[42,617],[100,622],[341,634],[422,641],[460,648],[513,651],[531,642],[565,629],[620,612],[658,601],[677,586],[686,547],[696,538],[705,548],[721,573],[732,587],[745,587],[761,560],[771,549],[784,550],[807,548],[850,530],[904,517],[921,508],[937,493],[968,480],[996,483],[1057,496],[1098,488],[1111,478],[1143,458],[1157,448],[1200,445],[1260,460],[1290,450],[1310,420],[1323,388],[1330,353],[1342,303],[1358,260],[1367,255],[1378,263],[1391,278],[1426,295],[1500,320],[1639,343],[1678,356]];
const whiteLine = [[5,593],[677,593],[687,572],[770,570],[818,567],[846,566],[882,565],[904,562],[928,558],[950,557],[1060,557],[1135,554],[1275,548],[1300,517],[1322,482],[1327,427],[1334,413],[1357,400],[1391,393],[1444,389],[1512,383],[1537,372],[1573,365],[1634,362],[1678,362]];

// y on the left, after the first step, before the second step, after it, and at the end
const levels = [
    [358,322,333,103,113,TEAL],[405,371,379,163,161,TEAL],[453,422,418,222,212,TEAL],
    [499,472,466,277,262,PURPLE],[547,521,510,348,311,PURPLE],[642,620,598,450,411,PURPLE]
];
const lowLines = [
    [[0,690],[540,690]],
    [[0,738],[540,736]],
    [[0,787],[300,785],[540,783],[660,780],[680,772]],
    [[720,772],[900,755],[1296,752]],
    [[870,806],[1270,770],[1300,752]],
    [[1322,642],[1330,552],[1680,461]],
    [[1322,642],[1332,600],[1680,511]],
    [[1322,642],[1335,625],[1680,561]],
    [[1322,644],[1345,642],[1680,611]]
];

function points(list) {
    return list.map(p => p.join(',')).join(' ');
}

function axisTicks(fromY, toY, gap) {
    let out = '';
    for (let y = fromY, n = 0; y < toY; y += gap / 2, n++) {
        const len = n % 2 === 0 ? 9 : 5;
        out += `<path d="M1711 ${y} h${len}" stroke="#a00000" stroke-width="1.5"/>`;
    }
    return out;
}

function axisFrame(top, bottom) {
    return `<path d="M1711 ${top} V${bottom}" stroke="#a00000" stroke-width="2"/>`;
}

function dotted(y) {
    return `<path d="M2 ${y} H1708" stroke="#a01010" stroke-width="1.5" stroke-dasharray="2 6"/>`;
}

function drawPrice() {
    let out = '';

    for (let p = 12; p <= 22; p++) {
        out += dotted(priceY(p));
        out += `<text class="axis-label" x="1780" y="${priceY(p) + 7}">${p.toFixed(2)}</text>`;
    }

    levels.forEach(([a, b, c, d, e, col]) => {
        const at = t => c + (d - c) * t;
        const pts = [[0,a],[670,a],[680,a - 8],[692,b],[1270,c],[1285,at(.35)],[1294,at(.35)],[1303,at(.6)],[1314,at(.6)],[1326,at(.85)],[1335,d],[1680,e]];
        out += `<polyline points="${points(pts)}" fill="none" stroke="${col}" stroke-width="1.5" stroke-dasharray="7 5"/>`;
    });
    lowLines.forEach(line => {
        out += `<polyline points="${points(line)}" fill="none" stroke="${TEAL_DIM}" stroke-width="1.5" stroke-dasharray="7 5"/>`;
    });

    candles.forEach(([i, kind, high, top, bottom, low]) => {
        const x = barX(i);
        if (kind === 'c') {
            out += `<path d="M${x} ${high} V${low}" stroke="#34c8c8" stroke-width="1.5"/>`;
            out += `<rect x="${x - 3.5}" y="${top}" width="7" height="${Math.max(bottom - top, 2)}" fill="${CYAN}"/>`;
        } else if (kind === 'r') {
            out += `<path d="M${x} ${high} V${low}" stroke="${RED}" stroke-width="1.5"/>`;
            out += `<rect x="${x - 3.5}" y="${top}" width="7" height="${Math.max(bottom - top, 2)}" fill="#000" stroke="${RED}" stroke-width="1.5"/>`;
        } else {
            out += `<path d="M${x} ${high} V${low} M${x - 3} ${top} h6" stroke="#e8e8e8" stroke-width="1.5"/>`;
        }
    });

    out += `<polyline points="${points(yellowLine)}" fill="none" stroke="#f0f000" stroke-width="3"/>`;
    out += `<polyline points="${points(whiteLine)}" fill="none" stroke="#f4f4f4" stroke-width="3"/>`;

    chips.forEach(({ sx, x0, y0, sy, cols }) => {
        cols.forEach(([cx, top, bottom, cells]) => {
            const x = x0 + cx / sx - 4.5;
            const y1 = y0 + top / sy;
            const y2 = y0 + bottom / sy;
            out += `<rect x="${x}" y="${y1}" width="9" height="${y2 - y1}" fill="#000" stroke="${GREY}" stroke-width="1.5"/>`;
            for (let c = 1; c < cells; c++) {
                const y = y1 + (y2 - y1) * c / cells;
                out += `<path d="M${x} ${y} h9" stroke="${GREY}" stroke-width="1.5"/>`;
            }
        });
    });

    out += `<path d="M398 796 H386 M392 791 L386 796 L392 801" fill="none" stroke="#a0a0a0" stroke-width="1.2"/>`;
    out += `<text class="note" x="407" y="803">11.52</text>`;
    out += `<path d="M1350 104 L1332 100 M1336 97 L1332 100 L1335 104" fill="none" stroke="#a0a0a0" stroke-width="1.2"/>`;
    out += `<text class="note" x="1352" y="113">22.97</text>`;

    [[1309,'涨','#7a0a14'],[1516,'榜','#8a4a10'],[1656,'财','#103a6a']].forEach(([x, word, col]) => {
        out += `<rect x="${x}" y="806" width="20" height="18" fill="${col}"/>`;
        out += `<text class="mark-label" x="${x + 10}" y="822">${word}</text>`;
    });

    out += axisFrame(95, 826);
    out += axisTicks(96, 826, 60.8);
    document.getElementById('priceChart').innerHTML = out;
}

function average(values, end, span) {
    let sum = 0;
    for (let k = end - span + 1; k <= end; k++) {
        sum += values[k];
    }
    return sum / span;
}

function drawVolume() {
    let out = '';

    for (let v = 5000; v <= 45000; v += 5000) {
        out += dotted(volY(v));
        out += `<text class="axis-label" x="1780" y="${volY(v) + 7}">${v}</text>`;
    }

    volumes.forEach(([h, isRed], i) => {
        const x = barX(i) - 3.5;
        if (isRed) {
            out += `<rect x="${x}" y="${1275 - h}" width="7" height="${h}" fill="#000" stroke="${RED}" stroke-width="1.5"/>`;
        } else {
            out += `<rect x="${x}" y="${1275 - h}" width="7.5" height="${h}" fill="${CYAN}"/>`;
        }
    });

    const values = earlier.concat(volumes.map(v => v[0]));
    const ma5 = [];
    const ma10 = [];
    volumes.forEach((v, i) => {
        const k = i + earlier.length;
        ma5.push([barX(i), 1275 - average(values, k, 5)]);
        ma10.push([barX(i), 1275 - average(values, k, 10)]);
    });
    out += `<polyline points="${points(ma5)}" fill="none" stroke="#e4e4e4" stroke-width="1.5"/>`;
    out += `<polyline points="${points(ma10)}" fill="none" stroke="#e4e400" stroke-width="1.8"/>`;

    out += `<rect x="1712" y="882" width="73" height="23" fill="#00008c" stroke="#a00000" stroke-width="1"/>`;
    out += `<text class="blue-label" x="1713" y="900">39782</text>`;
    out += `<rect x="1712" y="1260" width="37" height="22" fill="#000" stroke="#a00000" stroke-width="1.5"/>`;
    out += `<text class="x-label" x="1714" y="1278">X10</text>`;

    out += axisFrame(849, 1282);
    out += axisTicks(858, 1274, 92.6);
    document.getElementById('volumeChart').innerHTML = out;
}

const tickData = [
    ['14:56','16.26','0.5','S',1],['14:56','16.26','0.7','S',2],['14:56','16.26','0.2','S',1],['14:56','16.27','1.1','B',2],['14:56','16.27','0.3','B',2],
    ['14:56','16.26','0.2','S',1],['14:56','16.26','1.0','S',2],['14:56','16.26','0.8','S',4],['14:56','16.27','0.8','B',2],['14:56','16.27','4.2','B',4],
    ['14:56','16.27','1.5','B',5],['14:56','16.27','17.1','B',21],['14:56','16.26','1.3','S',3],['14:56','16.27','4.7','B',4],['14:56','16.27','1.8','B',2],
    ['14:56','16.26','0.3','S',1],['14:56','16.29','47.9','B',40],['14:56','16.28','4.4','B',9],['14:56','16.27','2.3','S',1],['14:56','16.26','11.5','S',19],
    ['15:00','16.28','163.1','',108]
];

function drawTicks() {
    const box = document.getElementById('ticks');
    box.innerHTML = tickData.map(([time, price, vol, side, count]) => `
        <div class="tick">
            <span class="t-time">${time}</span>
            <span class="t-price up">${price}</span>
            <span class="t-vol ${side ? '' : 'big'}">${vol}<u>万</u></span>
            <span class="t-side ${side === 'B' ? 'up' : 'down-t'}">${side}</span>
            <span class="t-count">${count}</span>
        </div>`).join('');
}

drawPrice();
drawVolume();
drawTicks();
```
